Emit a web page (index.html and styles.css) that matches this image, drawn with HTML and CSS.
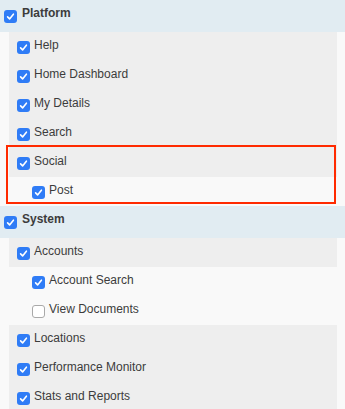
FILE: index.html
```html
<!DOCTYPE html>
<html lang="en">
<head>
    <meta charset="UTF-8">
    <meta name="viewport" content="width=device-width, initial-scale=1.0">
    <title>Permissions</title>
    <link rel="stylesheet" href="styles.css">
</head>
<body>
    <ul class="tree">
        <li class="group">
            <div class="row head">
                <span class="box on"><svg viewBox="0 0 13 13"><path d="M3.6 6.9 L5.6 8.9 L9.4 4.2"/></svg></span>
                <span class="name">Platform</span>
            </div>
            <ul class="items">
                <li>
                    <div class="row">
                        <span class="box on"><svg viewBox="0 0 13 13"><path d="M3.6 6.9 L5.6 8.9 L9.4 4.2"/></svg></span>
                        <span class="name">Help</span>
                    </div>
                </li>
                <li>
                    <div class="row">
                        <span class="box on"><svg viewBox="0 0 13 13"><path d="M3.6 6.9 L5.6 8.9 L9.4 4.2"/></svg></span>
                        <span class="name">Home Dashboard</span>
                    </div>
                </li>
                <li>
                    <div class="row">
                        <span class="box on"><svg viewBox="0 0 13 13"><path d="M3.6 6.9 L5.6 8.9 L9.4 4.2"/></svg></span>
                        <span class="name">My Details</span>
                    </div>
                </li>
                <li>
                    <div class="row">
                        <span class="box on"><svg viewBox="0 0 13 13"><path d="M3.6 6.9 L5.6 8.9 L9.4 4.2"/></svg></span>
                        <span class="name">Search</span>
                    </div>
                </li>
                <li class="marked">
                    <div class="row">
                        <span class="box on"><svg viewBox="0 0 13 13"><path d="M3.6 6.9 L5.6 8.9 L9.4 4.2"/></svg></span>
                        <span class="name">Social</span>
                    </div>
                    <ul class="sub">
                        <li>
                            <div class="row">
                                <span class="box on"><svg viewBox="0 0 13 13"><path d="M3.6 6.9 L5.6 8.9 L9.4 4.2"/></svg></span>
                                <span class="name">Post</span>
                            </div>
                        </li>
                    </ul>
                </li>
            </ul>
        </li>
        <li class="group">
            <div class="row head">
                <span class="box on"><svg viewBox="0 0 13 13"><path d="M3.6 6.9 L5.6 8.9 L9.4 4.2"/></svg></span>
                <span class="name">System</span>
            </div>
            <ul class="items">
                <li>
                    <div class="row">
                        <span class="box on"><svg viewBox="0 0 13 13"><path d="M3.6 6.9 L5.6 8.9 L9.4 4.2"/></svg></span>
                        <span class="name">Accounts</span>
                    </div>
                    <ul class="sub">
                        <li>
                            <div class="row">
                                <span class="box on"><svg viewBox="0 0 13 13"><path d="M3.6 6.9 L5.6 8.9 L9.4 4.2"/></svg></span>
                                <span class="name">Account Search</span>
                            </div>
                        </li>
                        <li>
                            <div class="row">
                                <span class="box"></span>
                                <span class="name">View Documents</span>
                            </div>
                        </li>
                    </ul>
                </li>
                <li>
                    <div class="row">
                        <span class="box on"><svg viewBox="0 0 13 13"><path d="M3.6 6.9 L5.6 8.9 L9.4 4.2"/></svg></span>
                        <span class="name">Locations</span>
                    </div>
                </li>
                <li>
                    <div class="row">
                        <span class="box on"><svg viewBox="0 0 13 13"><path d="M3.6 6.9 L5.6 8.9 L9.4 4.2"/></svg></span>
                        <span class="name">Performance Monitor</span>
                    </div>
                </li>
                <li>
                    <div class="row">
                        <span class="box on"><svg viewBox="0 0 13 13"><path d="M3.6 6.9 L5.6 8.9 L9.4 4.2"/></svg></span>
                        <span class="name">Stats and Reports</span>
                    </div>
                </li>
            </ul>
        </li>
    </ul>
</body>
</html>
```

FILE: styles.css
```css
body {
    margin: 0;
    background-color: #f9f9f9;
    font-family: 'Liberation Sans', Arial, sans-serif;
    font-size: 12px;
    color: #3c3c3c;
}
ul {
    list-style: none;
    margin: 0;
    padding: 0;
}
.row {
    display: flex;
    align-items: center;
    gap: 4px;
    height: 29px;
}
.name {
    padding-bottom: 4px;
}
.head {
    gap: 5px;
    height: 32px;
    padding-left: 4px;
    background-color: #e1ecf2;
    font-weight: bold;
}
.head .name {
    padding-bottom: 6px;
}
.items {
    margin: 0 8px 0 9px;
}
.items > li > .row {
    padding-left: 8px;
    background-color: #eeeeee;
}
.sub .row {
    padding-left: 23px;
}
.marked {
    position: relative;
}
.marked::after {
    content: "";
    position: absolute;
    top: -3px;
    left: -3px;
    right: 1px;
    bottom: 2px;
    border: 2.5px solid #ff2a00;
    pointer-events: none;
}
.box {
    box-sizing: border-box;
    width: 13px;
    height: 13px;
    flex-shrink: 0;
    margin-top: 1px;
    border-radius: 3px;
    border: 1px solid #a9a9a9;
    background-color: #ffffff;
}
.box.on {
    border: none;
    background-color: #2f7cf6;
}
.box svg {
    display: block;
    width: 13px;
    height: 13px;
}
.box path {
    fill: none;
    stroke: #ffffff;
    stroke-width: 1.6;
    stroke-linecap: round;
    stroke-linejoin: round;
}
```
